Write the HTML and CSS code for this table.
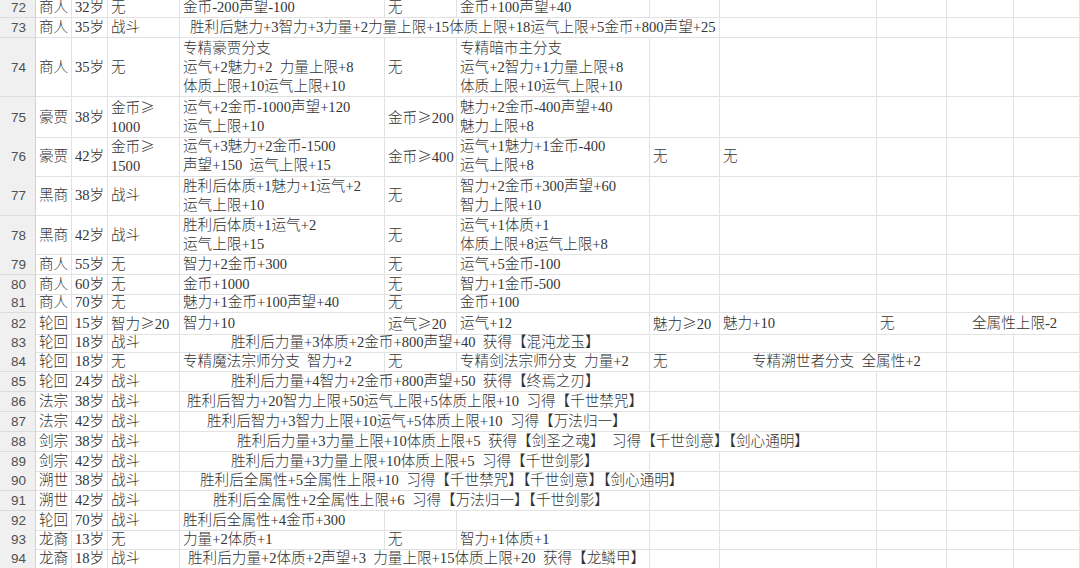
FILE: index.html
```html
<!DOCTYPE html>
<html lang="zh-CN">
<head>
<meta charset="utf-8">
<title>表格</title>
<link rel="stylesheet" href="styles.css">
</head>
<body>
<div class="sheet">
  <div class="row h20"><div class="rn">72</div><div class="c">商人</div><div class="c">32岁</div><div class="c">无</div><div class="c">金币-200声望-100</div><div class="c">无</div><div class="c">金币+100声望+40</div><div class="c"></div><div class="c"></div><div class="c"></div><div class="c"></div><div class="c"></div></div>
  <div class="row h20"><div class="rn">73</div><div class="c">商人</div><div class="c">35岁</div><div class="c">战斗</div><div class="c s4 p10">胜利后魅力+3智力+3力量+2力量上限+15体质上限+18运气上限+5金币+800声望+25</div><div class="c"></div><div class="c"></div><div class="c"></div><div class="c"></div></div>
  <div class="row h59"><div class="rn">74</div><div class="c">商人</div><div class="c">35岁</div><div class="c">无</div><div class="c">专精豪贾分支<br>运气+2魅力+2 力量上限+8<br>体质上限+10运气上限+10</div><div class="c">无</div><div class="c">专精暗市主分支<br>运气+2智力+1力量上限+8<br>体质上限+10运气上限+10</div><div class="c"></div><div class="c"></div><div class="c"></div><div class="c"></div><div class="c"></div></div>
  <div class="row h39"><div class="rn">75</div><div class="c">豪贾</div><div class="c">38岁</div><div class="c"><div>金币<span class="fw">≥</span><br>1000</div></div><div class="c">运气+2金币-1000声望+120<br>运气上限+10</div><div class="c"><div>金币<span class="fw">≥</span>200</div></div><div class="c">魅力+2金币-400声望+40<br>魅力上限+8</div><div class="c"></div><div class="c"></div><div class="c"></div><div class="c"></div><div class="c"></div></div>
  <div class="row h40"><div class="rn">76</div><div class="c">豪贾</div><div class="c">42岁</div><div class="c"><div>金币<span class="fw">≥</span><br>1500</div></div><div class="c">运气+3魅力+2金币-1500<br>声望+150 运气上限+15</div><div class="c"><div>金币<span class="fw">≥</span>400</div></div><div class="c">运气+1魅力+1金币-400<br>运气上限+8</div><div class="c">无</div><div class="c">无</div><div class="c"></div><div class="c"></div><div class="c"></div></div>
  <div class="row h40"><div class="rn">77</div><div class="c">黑商</div><div class="c">38岁</div><div class="c">战斗</div><div class="c">胜利后体质+1魅力+1运气+2<br>运气上限+10</div><div class="c">无</div><div class="c">智力+2金币+300声望+60<br>智力上限+10</div><div class="c"></div><div class="c"></div><div class="c"></div><div class="c"></div><div class="c"></div></div>
  <div class="row h38"><div class="rn">78</div><div class="c">黑商</div><div class="c">42岁</div><div class="c">战斗</div><div class="c">胜利后体质+1运气+2<br>运气上限+15</div><div class="c">无</div><div class="c">运气+1体质+1<br>体质上限+8运气上限+8</div><div class="c"></div><div class="c"></div><div class="c"></div><div class="c"></div><div class="c"></div></div>
  <div class="row h21"><div class="rn">79</div><div class="c">商人</div><div class="c">55岁</div><div class="c">无</div><div class="c">智力+2金币+300</div><div class="c">无</div><div class="c">运气+5金币-100</div><div class="c"></div><div class="c"></div><div class="c"></div><div class="c"></div><div class="c"></div></div>
  <div class="row h18"><div class="rn">80</div><div class="c">商人</div><div class="c">60岁</div><div class="c">无</div><div class="c">金币+1000</div><div class="c">无</div><div class="c">智力+1金币-500</div><div class="c"></div><div class="c"></div><div class="c"></div><div class="c"></div><div class="c"></div></div>
  <div class="row h20"><div class="rn">81</div><div class="c">商人</div><div class="c">70岁</div><div class="c">无</div><div class="c">魅力+1金币+100声望+40</div><div class="c">无</div><div class="c">金币+100</div><div class="c"></div><div class="c"></div><div class="c"></div><div class="c"></div><div class="c"></div></div>
  <div class="row h20"><div class="rn">82</div><div class="c">轮回</div><div class="c">15岁</div><div class="c"><div>智力<span class="fw">≥</span>20</div></div><div class="c">智力+10</div><div class="c"><div>运气<span class="fw">≥</span>20</div></div><div class="c">运气+12</div><div class="c"><div>魅力<span class="fw">≥</span>20</div></div><div class="c">魅力+10</div><div class="c">无</div><div class="c s2 p25">全属性上限-2</div></div>
  <div class="row h19"><div class="rn">83</div><div class="c">轮回</div><div class="c">18岁</div><div class="c">战斗</div><div class="c s3 p51">胜利后力量+3体质+2金币+800声望+40 获得【混沌龙玉】</div><div class="c"></div><div class="c"></div><div class="c"></div><div class="c"></div><div class="c"></div></div>
  <div class="row h20"><div class="rn">84</div><div class="c">轮回</div><div class="c">18岁</div><div class="c">无</div><div class="c">专精魔法宗师分支 智力+2</div><div class="c">无</div><div class="c">专精剑法宗师分支 力量+2</div><div class="c">无</div><div class="c s2 p32">专精溯世者分支 全属性+2</div><div class="c"></div><div class="c"></div></div>
  <div class="row h20"><div class="rn">85</div><div class="c">轮回</div><div class="c">24岁</div><div class="c">战斗</div><div class="c s3 p51">胜利后力量+4智力+2金币+800声望+50 获得【终焉之刃】</div><div class="c"></div><div class="c"></div><div class="c"></div><div class="c"></div><div class="c"></div></div>
  <div class="row h20"><div class="rn">86</div><div class="c">法宗</div><div class="c">38岁</div><div class="c">战斗</div><div class="c s3 p7">胜利后智力+20智力上限+50运气上限+5体质上限+10 习得【千世禁咒】</div><div class="c"></div><div class="c"></div><div class="c"></div><div class="c"></div><div class="c"></div></div>
  <div class="row h20"><div class="rn">87</div><div class="c">法宗</div><div class="c">42岁</div><div class="c">战斗</div><div class="c s3 p27">胜利后智力+3智力上限+10运气+5体质上限+10 习得【万法归一】</div><div class="c"></div><div class="c"></div><div class="c"></div><div class="c"></div><div class="c"></div></div>
  <div class="row h20"><div class="rn">88</div><div class="c">剑宗</div><div class="c">38岁</div><div class="c">战斗</div><div class="c s5 p57">胜利后力量+3力量上限+10体质上限+5 获得【剑圣之魂】 习得【千世剑意】【剑心通明】</div><div class="c"></div><div class="c"></div><div class="c"></div></div>
  <div class="row h19"><div class="rn">89</div><div class="c">剑宗</div><div class="c">42岁</div><div class="c">战斗</div><div class="c s3 p51">胜利后力量+3力量上限+10体质上限+5 习得【千世剑影】</div><div class="c"></div><div class="c"></div><div class="c"></div><div class="c"></div><div class="c"></div></div>
  <div class="row h20"><div class="rn">90</div><div class="c">溯世</div><div class="c">38岁</div><div class="c">战斗</div><div class="c s4 p20">胜利后全属性+5全属性上限+10 习得【千世禁咒】【千世剑意】【剑心通明】</div><div class="c"></div><div class="c"></div><div class="c"></div><div class="c"></div></div>
  <div class="row h20"><div class="rn">91</div><div class="c">溯世</div><div class="c">42岁</div><div class="c">战斗</div><div class="c s3 p33">胜利后全属性+2全属性上限+6 习得【万法归一】【千世剑影】</div><div class="c"></div><div class="c"></div><div class="c"></div><div class="c"></div><div class="c"></div></div>
  <div class="row h19"><div class="rn">92</div><div class="c">轮回</div><div class="c">70岁</div><div class="c">战斗</div><div class="c">胜利后全属性+4金币+300</div><div class="c"></div><div class="c"></div><div class="c"></div><div class="c"></div><div class="c"></div><div class="c"></div><div class="c"></div></div>
  <div class="row h19"><div class="rn">93</div><div class="c">龙裔</div><div class="c">13岁</div><div class="c">无</div><div class="c">力量+2体质+1</div><div class="c">无</div><div class="c">智力+1体质+1</div><div class="c"></div><div class="c"></div><div class="c"></div><div class="c"></div><div class="c"></div></div>
  <div class="row h20"><div class="rn">94</div><div class="c">龙裔</div><div class="c">18岁</div><div class="c">战斗</div><div class="c s3 p8">胜利后力量+2体质+2声望+3 力量上限+15体质上限+20 获得【龙鳞甲】</div><div class="c"></div><div class="c"></div><div class="c"></div><div class="c"></div><div class="c"></div></div>
</div>
</body>
</html>
```

FILE: styles.css
```css
html, body {
  margin: 0;
  padding: 0;
  background: #ffffff;
  overflow: hidden;
}

.sheet {
  width: 1080px;
  margin-top: -2px;
  font-family: "Liberation Serif", "Noto Sans CJK SC", serif;
  font-size: 14.6px;
  font-weight: 300;
  color: #333333;
  word-spacing: 0.25em;
}

.row {
  display: grid;
  grid-template-columns: 36px 36px 36px 72px 205px 72px 193px 70px 157px 70px 67px 66px;
}

.h18 { height: 18px; }
.h19 { height: 19px; }
.h20 { height: 20px; }
.h21 { height: 21px; }
.h38 { height: 38px; }
.h39 { height: 39px; }
.h40 { height: 40px; }
.h59 { height: 59px; }

.rn {
  box-sizing: border-box;
  background: #f0f0f0;
  border-right: 1px solid #d2d2d2;
  border-bottom: 1px solid #dcdcdc;
  font-family: "Liberation Sans", "Noto Sans", sans-serif;
  font-size: 13.5px;
  font-weight: 400;
  color: #505050;
  display: flex;
  align-items: center;
  justify-content: center;
  padding-left: 2px;
}

.c {
  box-sizing: border-box;
  min-width: 0;
  border-right: 1px solid #e2e2e2;
  border-bottom: 1px solid #e2e2e2;
  padding-left: 3px;
  line-height: 19px;
  white-space: nowrap;
  display: flex;
  flex-direction: column;
  justify-content: center;
  overflow: visible;
}

.fw {
  font-family: "Noto Sans CJK SC", sans-serif;
}

.s2 { grid-column: span 2; }
.s3 { grid-column: span 3; }
.s4 { grid-column: span 4; }
.s5 { grid-column: span 5; }

.p7 { padding-left: 7px; }
.p8 { padding-left: 8px; }
.p10 { padding-left: 10px; }
.p20 { padding-left: 20px; }
.p25 { padding-left: 25px; }
.p27 { padding-left: 27px; }
.p32 { padding-left: 32px; }
.p33 { padding-left: 33px; }
.p51 { padding-left: 51px; }
.p57 { padding-left: 57px; }
```
